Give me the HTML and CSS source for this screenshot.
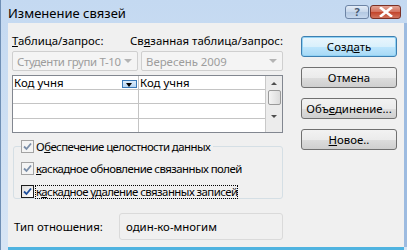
FILE: index.html
```html
<!DOCTYPE html>
<html lang="ru">
<head>
    <meta charset="UTF-8">
    <title>Изменение связей</title>
    <link rel="stylesheet" href="styles.css">
</head>
<body>
    <div class="window">
        <div class="titlebar">
            <span class="title">Изменение связей</span>
            <div class="caption-buttons">
                <span class="cap-btn help">?</span>
                <span class="cap-btn close">
                    <svg width="14" height="10" viewBox="0 0 14 10"><path d="M2 1 L12 9 M12 1 L2 9" stroke="#fff" stroke-width="2.6" stroke-linecap="square"/></svg>
                </span>
            </div>
        </div>

        <div class="client">
            <div class="main">
                <div class="labels">
                    <span class="lbl-left"><u>Т</u>аблица/запрос:</span>
                    <span class="lbl-right">Св<u>я</u>занная таблица/запрос:</span>
                </div>

                <div class="combos">
                    <div class="combo combo-left">
                        <span>Студенти групи Т-10</span>
                        <span class="arrow"></span>
                    </div>
                    <div class="combo combo-right">
                        <span>Вересень 2009</span>
                        <span class="arrow"></span>
                    </div>
                </div>

                <div class="fields">
                    <table class="fields-table">
                        <tr>
                            <td class="cell-left">Код учня <span class="cell-drop"></span></td>
                            <td>Код учня</td>
                        </tr>
                        <tr><td class="cell-left"></td><td></td></tr>
                        <tr><td class="cell-left"></td><td></td></tr>
                        <tr><td class="cell-left"></td><td></td></tr>
                    </table>
                    <div class="scrollbar">
                        <span class="sb-up"></span>
                        <span class="sb-thumb"></span>
                        <span class="sb-down"></span>
                    </div>
                </div>

                <fieldset class="group">
                    <legend class="check-row">
                        <span class="check disabled"><svg width="9" height="9" viewBox="0 0 9 9"><path d="M1 4.5 L3.5 7 L8 1.5" fill="none" stroke="#7a8ea8" stroke-width="1.8"/></svg></span>
                        <span>О<u>б</u>еспечение целостности данных</span>
                    </legend>
                    <div class="check-row">
                        <span class="check disabled"><svg width="9" height="9" viewBox="0 0 9 9"><path d="M1 4.5 L3.5 7 L8 1.5" fill="none" stroke="#7a8ea8" stroke-width="1.8"/></svg></span>
                        <span><u>к</u>аскадное обновление связанных полей</span>
                    </div>
                    <div class="check-row">
                        <span class="check"><svg width="9" height="9" viewBox="0 0 9 9"><path d="M1 4.5 L3.5 7 L8 1.5" fill="none" stroke="#1f4f9c" stroke-width="1.8"/></svg></span>
                        <span class="focused">к<u>а</u>скадное удаление связанных записей</span>
                    </div>
                </fieldset>

                <div class="reltype">
                    <span class="reltype-label">Тип отношения:</span>
                    <div class="reltype-box">один-ко-многим</div>
                </div>
            </div>

            <div class="actions">
                <button class="btn default">Созд<u>а</u>ть</button>
                <button class="btn">Отмена</button>
                <button class="btn">Объ<u>е</u>динение...</button>
                <button class="btn"><u>Н</u>овое..</button>
            </div>
        </div>
    </div>
</body>
</html>
```

FILE: styles.css
```css
/* Диалог "Изменение связей" */

body {
    margin: 0;
    font-family: "Noto Sans", "Open Sans", sans-serif;
    font-size: 11.4px;
    color: #000;
    background: #ffffff;
}

.window {
    width: 407px;
    height: 250px;
    overflow: hidden;
    box-sizing: border-box;
    background: linear-gradient(to bottom, #c4d9f1, #d7e5f5);
    border-left: 1px solid #6f8fb5;
    display: flex;
    flex-direction: column;
}

/* Заголовок окна */
.titlebar {
    height: 23px;
    display: flex;
    align-items: flex-start;
    justify-content: space-between;
    padding: 0 6px 0 7px;
}

.title {
    font-size: 13px;
    line-height: 15px;
    margin-top: 6px;
}

.caption-buttons {
    display: flex;
    gap: 1px;
    margin-top: 5px;
}

.cap-btn {
    height: 14px;
    border: 1px solid #6d84a5;
    border-radius: 3px;
    display: flex;
    align-items: center;
    justify-content: center;
    box-sizing: border-box;
}

.help {
    width: 24px;
    background: linear-gradient(to bottom, #e3ecf7, #c6d6ea 50%, #b3c8e2 51%, #c6d8ee);
    color: #46586f;
    font-size: 11px;
    font-weight: bold;
    line-height: 12px;
}

.close {
    width: 31px;
    background: linear-gradient(to bottom, #e3a596, #d36f5c 50%, #c3442b 51%, #d0735e);
    border-color: #7a3026;
}

/* Рабочая область */
.client {
    flex: 1;
    margin: 0 3px 3px 7px;
    background: #f0f0f0;
    display: flex;
    gap: 18px;
    padding: 10px 0 0 4px;
    box-shadow: 0 3px 0 #4fb3e0, 3px 0 0 #9dbbe0;
}

.main {
    width: 271px;
    display: flex;
    flex-direction: column;
}

.labels {
    display: flex;
    height: 15px;
    line-height: 15px;
    white-space: nowrap;
}

.lbl-left {
    width: 128px;
}

.combos {
    display: flex;
    gap: 3px;
    margin-top: 3px;
}

.combo {
    height: 20px;
    box-sizing: border-box;
    border: 1px solid #cfcfcf;
    border-radius: 2px;
    background: #f4f4f4;
    color: #9d9d9d;
    display: flex;
    align-items: center;
    justify-content: space-between;
    padding: 0 5px 0 4px;
    white-space: nowrap;
    overflow: hidden;
}

.combo-left {
    width: 126px;
    letter-spacing: -0.35px;
}

.combo-right {
    flex: 1;
}

.arrow {
    width: 0;
    height: 0;
    flex: none;
    border-left: 4px solid transparent;
    border-right: 4px solid transparent;
    border-top: 4px solid #b4b4b4;
}

/* Таблица полей */
.fields {
    margin-top: 4px;
    height: 58px;
    box-sizing: border-box;
    border: 1px solid #828790;
    background: #fff;
    display: flex;
}

.fields-table {
    flex: 1;
    border-collapse: collapse;
    table-layout: fixed;
}

.fields-table td {
    height: 13px;
    padding: 0 0 0 1px;
    border-bottom: 1px solid #c4c4c4;
    line-height: 13px;
    white-space: nowrap;
}

.fields-table tr:last-child td {
    border-bottom: none;
}

.fields-table .cell-left {
    width: 124px;
    border-right: 1px solid #c4c4c4;
}

.cell-drop {
    float: right;
    width: 15px;
    height: 8px;
    margin: 4px 1px 0 0;
    box-sizing: border-box;
    border: 1px solid #3a79b8;
    background: linear-gradient(to bottom, #dcecfb, #b9d6f3);
    position: relative;
}

.cell-drop::after {
    content: "";
    position: absolute;
    left: 3px;
    top: 2px;
    border-left: 3.5px solid transparent;
    border-right: 3.5px solid transparent;
    border-top: 4px solid #000;
}

.scrollbar {
    width: 16px;
    border-left: 1px solid #c9c9c9;
    background: #ececec;
    display: flex;
    flex-direction: column;
    align-items: center;
}

.sb-up,
.sb-down {
    width: 0;
    height: 0;
    border-left: 3px solid transparent;
    border-right: 3px solid transparent;
}

.sb-up {
    margin-top: 6px;
    border-bottom: 3px solid #4d4d4d;
}

.sb-thumb {
    width: 13px;
    height: 15px;
    margin-top: 5px;
    box-sizing: border-box;
    border: 1px solid #9a9a9a;
    border-radius: 2px;
    background: linear-gradient(to right, #f4f4f4, #dcdcdc);
}

.sb-down {
    margin-top: 10px;
    border-top: 3px solid #4d4d4d;
}

/* Группа флажков */
.group {
    margin: 6px 0 0 1px;
    padding: 0 0 0 7px;
    border: 1px solid #d5dfe5;
    border-radius: 3px;
    height: 60px;
    box-sizing: border-box;
}

.group legend {
    padding: 0 3px 0 0;
}

.check-row {
    display: flex;
    align-items: center;
    gap: 2px;
    height: 23px;
    white-space: nowrap;
    letter-spacing: -0.55px;
}

legend.check-row {
    height: 15px;
}

.check {
    width: 13px;
    height: 13px;
    flex: none;
    box-sizing: border-box;
    border: 1px solid #1c1c1c;
    background: linear-gradient(135deg, #dcdcdc, #ffffff);
    display: flex;
    align-items: center;
    justify-content: center;
}

.check.disabled {
    border-color: #a3a3a3;
    background: #f4f4f4;
}

.group div.check-row:first-of-type {
    margin-top: 3px;
}

.focused {
    outline: 1px dotted #000;
    line-height: 12px;
}

/* Тип отношения */
.reltype {
    display: flex;
    align-items: center;
    margin-top: 14px;
    padding-left: 2px;
}

.reltype-label {
    width: 105px;
}

.reltype-box {
    flex: 1;
    height: 27px;
    box-sizing: border-box;
    border: 1px solid #dadada;
    border-radius: 3px;
    display: flex;
    align-items: center;
    padding-left: 6px;
}

/* Кнопки */
.actions {
    width: 96px;
    display: flex;
    flex-direction: column;
    gap: 10px;
    padding-top: 3px;
}

.btn {
    height: 21px;
    font-family: inherit;
    font-size: 11.4px;
    padding: 0;
    border: 1px solid #707070;
    border-radius: 3px;
    background: linear-gradient(to bottom, #f2f2f2, #ebebeb 50%, #dddddd 51%, #cfcfcf);
    color: #000;
}

.btn.default {
    border-color: #3c7fb1;
    background: linear-gradient(to bottom, #eaf6fd, #d9f0fc 50%, #bee6fd 51%, #a7d9f5);
    box-shadow: inset 0 0 0 1px #92d2f4;
}
```
